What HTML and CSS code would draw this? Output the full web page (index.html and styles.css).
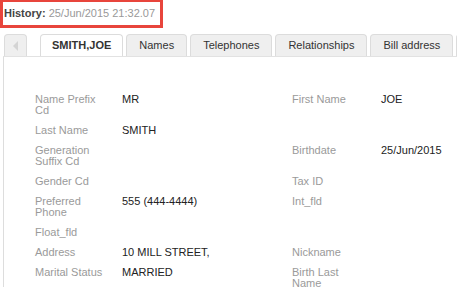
FILE: index.html
```html
<!DOCTYPE html>
<html lang="en">

<head>
  <meta charset="UTF-8" />
  <meta name="viewport" content="width=device-width, initial-scale=1.0" />
  <title>Customer History</title>
  <link rel="stylesheet" href="styles.css">
</head>

<body>
  <div class="history">History: <span class="history-date">25/Jun/2015 21:32.07</span></div>

  <div class="tabs">
    <div class="tab tab-prev"><span class="arrow"></span></div>
    <div class="tab active">SMITH,JOE</div>
    <div class="tab">Names</div>
    <div class="tab">Telephones</div>
    <div class="tab">Relationships</div>
    <div class="tab">Bill address</div>
    <div class="tab tab-more"></div>
  </div>

  <div class="panel">
    <div class="fields">
      <div class="label">Name Prefix Cd</div>
      <div class="value">MR</div>
      <div class="label">First Name</div>
      <div class="value">JOE</div>

      <div class="label">Last Name</div>
      <div class="value">SMITH</div>
      <div class="label"></div>
      <div class="value"></div>

      <div class="label">Generation Suffix Cd</div>
      <div class="value"></div>
      <div class="label">Birthdate</div>
      <div class="value">25/Jun/2015</div>

      <div class="label">Gender Cd</div>
      <div class="value"></div>
      <div class="label">Tax ID</div>
      <div class="value"></div>

      <div class="label">Preferred Phone</div>
      <div class="value">555 (444-4444)</div>
      <div class="label">Int_fld</div>
      <div class="value"></div>

      <div class="label">Float_fld</div>
      <div class="value"></div>
      <div class="label"></div>
      <div class="value"></div>

      <div class="label">Address</div>
      <div class="value">10 MILL STREET,</div>
      <div class="label">Nickname</div>
      <div class="value"></div>

      <div class="label">Marital Status</div>
      <div class="value">MARRIED</div>
      <div class="label">Birth Last Name</div>
      <div class="value"></div>
    </div>
  </div>
</body>

</html>
```

FILE: styles.css
```css
body {
  margin: 0;
  font-family: 'Liberation Sans', Arial, sans-serif;
  font-size: 11px;
  color: #333;
  background: #fff;
  overflow: hidden;
}

.history {
  display: inline-block;
  border: 3px solid #e8453c;
  border-top-width: 2px;
  height: 23px;
  line-height: 23px;
  padding: 0 5px 0 1px;
  font-weight: bold;
  color: #444;
}

.history-date {
  font-weight: normal;
  color: #999;
}

.tabs {
  display: flex;
  gap: 3px;
  margin: 6px 0 0 3px;
  padding-left: 1px;
  border-bottom: 1px solid #e2e2e2;
  height: 22px;
  overflow: hidden;
  white-space: nowrap;
}

.tab {
  flex-shrink: 0;
  height: 22px;
  line-height: 21px;
  padding: 0 12px;
  background: #efefef;
  border: 1px solid #dcdcdc;
  border-bottom: none;
  border-radius: 4px 4px 0 0;
  color: #333;
}

.tab.active {
  background: #fff;
  font-weight: bold;
  height: 23px;
  padding: 0 11px;
}

.tab-prev {
  width: 21px;
  padding: 0;
  margin-right: 10px;
  display: flex;
  align-items: center;
}

.tab-more {
  width: 20px;
  padding: 0;
}

.arrow {
  margin-left: 8px;
  width: 0;
  height: 0;
  border-top: 5px solid transparent;
  border-bottom: 5px solid transparent;
  border-right: 5px solid #d4d4d4;
}

.panel {
  margin-left: 3px;
  border-left: 1px solid #dddddd;
  padding: 37px 0 0 31px;
  height: 193px;
}

.fields {
  display: grid;
  grid-template-columns: 87px 170px 89px 1fr;
  row-gap: 9px;
  line-height: 11px;
}

.label {
  color: #9a9a9a;
  padding-right: 17px;
}

.value {
  color: #222;
}
```
